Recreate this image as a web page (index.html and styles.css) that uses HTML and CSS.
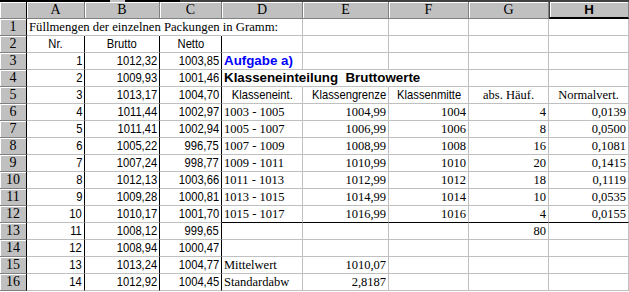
FILE: index.html
```html
<!DOCTYPE html>
<html lang="de">
<head>
<meta charset="utf-8">
<title>Füllmengen</title>
<link rel="stylesheet" href="styles.css">
</head>
<body>
<div class="topbar"></div>
<div class="sheet">
  <div class="h corner"></div><div class="h">A</div><div class="h">B</div><div class="h">C</div><div class="h">D</div><div class="h">E</div><div class="h">F</div><div class="h">G</div><div class="h sel">H</div>

  <div class="h rh">1</div><div class="c s title nr">Füllmengen der einzelnen Packungen in Gramm:</div><div class="c nr"></div><div class="c nr"></div><div class="c"></div><div class="c"></div><div class="c"></div><div class="c"></div><div class="c"></div>

  <div class="h rh">2</div><div class="c m kr"><span class="n">Nr.</span></div><div class="c m kr"><span class="n">Brutto</span></div><div class="c m kr"><span class="n">Netto</span></div><div class="c"></div><div class="c"></div><div class="c"></div><div class="c"></div><div class="c"></div>

  <div class="h rh">3</div><div class="c r kr"><span class="n">1</span></div><div class="c r kr"><span class="n">1012,32</span></div><div class="c r kr"><span class="n">1003,85</span></div><div class="c b blue">Aufgabe a)</div><div class="c"></div><div class="c"></div><div class="c"></div><div class="c"></div>

  <div class="h rh">4</div><div class="c r kr"><span class="n">2</span></div><div class="c r kr"><span class="n">1009,93</span></div><div class="c r kr"><span class="n">1001,46</span></div><div class="c b nr">Klasseneinteilung&nbsp; Bruttowerte</div><div class="c nr"></div><div class="c"></div><div class="c"></div><div class="c"></div>

  <div class="h rh">5</div><div class="c r kr"><span class="n">3</span></div><div class="c r kr"><span class="n">1013,17</span></div><div class="c r kr"><span class="n">1004,70</span></div><div class="c m"><span class="n">Klasseneint.</span></div><div class="c m"><span class="n">Klassengrenze</span></div><div class="c m"><span class="n">Klassenmitte</span></div><div class="c m s">abs. Häuf.</div><div class="c m s">Normalvert.</div>

  <div class="h rh">6</div><div class="c r kr"><span class="n">4</span></div><div class="c r kr"><span class="n">1011,44</span></div><div class="c r kr"><span class="n">1002,97</span></div><div class="c s">1003 - 1005</div><div class="c r s">1004,99</div><div class="c r s">1004</div><div class="c r s">4</div><div class="c r s">0,0139</div>

  <div class="h rh">7</div><div class="c r kr"><span class="n">5</span></div><div class="c r kr"><span class="n">1011,41</span></div><div class="c r kr"><span class="n">1002,94</span></div><div class="c s">1005 - 1007</div><div class="c r s">1006,99</div><div class="c r s">1006</div><div class="c r s">8</div><div class="c r s">0,0500</div>

  <div class="h rh">8</div><div class="c r kr"><span class="n">6</span></div><div class="c r kr"><span class="n">1005,22</span></div><div class="c r kr"><span class="n">996,75</span></div><div class="c s">1007 - 1009</div><div class="c r s">1008,99</div><div class="c r s">1008</div><div class="c r s">16</div><div class="c r s">0,1081</div>

  <div class="h rh">9</div><div class="c r kr"><span class="n">7</span></div><div class="c r kr"><span class="n">1007,24</span></div><div class="c r kr"><span class="n">998,77</span></div><div class="c s">1009 - 1011</div><div class="c r s">1010,99</div><div class="c r s">1010</div><div class="c r s">20</div><div class="c r s">0,1415</div>

  <div class="h rh">10</div><div class="c r kr"><span class="n">8</span></div><div class="c r kr"><span class="n">1012,13</span></div><div class="c r kr"><span class="n">1003,66</span></div><div class="c s">1011 - 1013</div><div class="c r s">1012,99</div><div class="c r s">1012</div><div class="c r s">18</div><div class="c r s">0,1119</div>

  <div class="h rh">11</div><div class="c r kr"><span class="n">9</span></div><div class="c r kr"><span class="n">1009,28</span></div><div class="c r kr"><span class="n">1000,81</span></div><div class="c s">1013 - 1015</div><div class="c r s">1014,99</div><div class="c r s">1014</div><div class="c r s">10</div><div class="c r s">0,0535</div>

  <div class="h rh">12</div><div class="c r kr"><span class="n">10</span></div><div class="c r kr"><span class="n">1010,17</span></div><div class="c r kr"><span class="n">1001,70</span></div><div class="c s kb">1015 - 1017</div><div class="c r s kb">1016,99</div><div class="c r s kb">1016</div><div class="c r s kb">4</div><div class="c r s kb">0,0155</div>

  <div class="h rh">13</div><div class="c r kr"><span class="n">11</span></div><div class="c r kr"><span class="n">1008,12</span></div><div class="c r kr"><span class="n">999,65</span></div><div class="c"></div><div class="c"></div><div class="c"></div><div class="c r s">80</div><div class="c"></div>

  <div class="h rh">14</div><div class="c r kr"><span class="n">12</span></div><div class="c r kr"><span class="n">1008,94</span></div><div class="c r kr"><span class="n">1000,47</span></div><div class="c"></div><div class="c"></div><div class="c"></div><div class="c"></div><div class="c"></div>

  <div class="h rh">15</div><div class="c r kr"><span class="n">13</span></div><div class="c r kr"><span class="n">1013,24</span></div><div class="c r kr"><span class="n">1004,77</span></div><div class="c s">Mittelwert</div><div class="c r s">1010,07</div><div class="c"></div><div class="c"></div><div class="c"></div>

  <div class="h rh">16</div><div class="c r kr"><span class="n">14</span></div><div class="c r kr"><span class="n">1012,92</span></div><div class="c r kr"><span class="n">1004,45</span></div><div class="c s">Standardabw</div><div class="c r s">2,8187</div><div class="c"></div><div class="c"></div><div class="c"></div>
</div>
</body>
</html>
```
FILE: styles.css
```css
html, body {
  margin: 0;
  padding: 0;
  background: #fff;
}

.topbar {
  height: 2px;
  width: 629px;
  background: linear-gradient(to right, #000 0 110px, #c0c0c0 110px 125px, #000 125px 180px, #404040 180px 629px);
}

.sheet {
  display: grid;
  grid-template-columns: 27px 58px 75px 62px 81px 86px 80px 80px 80px;
  grid-template-rows: repeat(17, 17px);
  width: 629px;
  font-family: "Liberation Sans", Arial, sans-serif;
  font-size: 13.33px;
  color: #000;
}

.sheet > div {
  box-sizing: border-box;
  white-space: nowrap;
}

.h {
  background: #c0c0c0;
  border-right: 1px solid #808080;
  border-bottom: 1px solid #808080;
  box-shadow: inset 1px 1px 0 #fff;
  font-family: "Liberation Serif", "Times New Roman", serif;
  font-size: 14px;
  line-height: 16px;
  text-align: center;
  overflow: hidden;
}

.h.corner {
  border-right-color: #000;
}

.h.sel {
  font-family: "Liberation Sans", Arial, sans-serif;
  font-weight: bold;
  font-size: 13.33px;
  border-bottom: 2px solid #000;
  border-left: 1px solid #404040;
  line-height: 15px;
}

.h.rh {
  border-right-color: #000;
  font-size: 14px;
}

.c {
  border-right: 1px solid #c0c0c0;
  border-bottom: 1px solid #c0c0c0;
  padding: 0 2px;
  line-height: 16px;
  overflow: visible;
  background: transparent;
}

.n {
  display: inline-block;
  transform: scaleX(0.84);
  transform-origin: center;
}

.r .n {
  transform-origin: right center;
}

.s {
  font-family: "Liberation Serif", "Times New Roman", serif;
  font-size: 12.5px;
}

.title {
  font-size: 12.7px;
}

.b {
  font-weight: bold;
}

.r { text-align: right; }
.m { text-align: center; }
.blue { color: #0000ff; }

.nr { border-right-color: transparent; }
.kr { border-right-color: #000; }
.kb { border-bottom-color: #000; }
```
